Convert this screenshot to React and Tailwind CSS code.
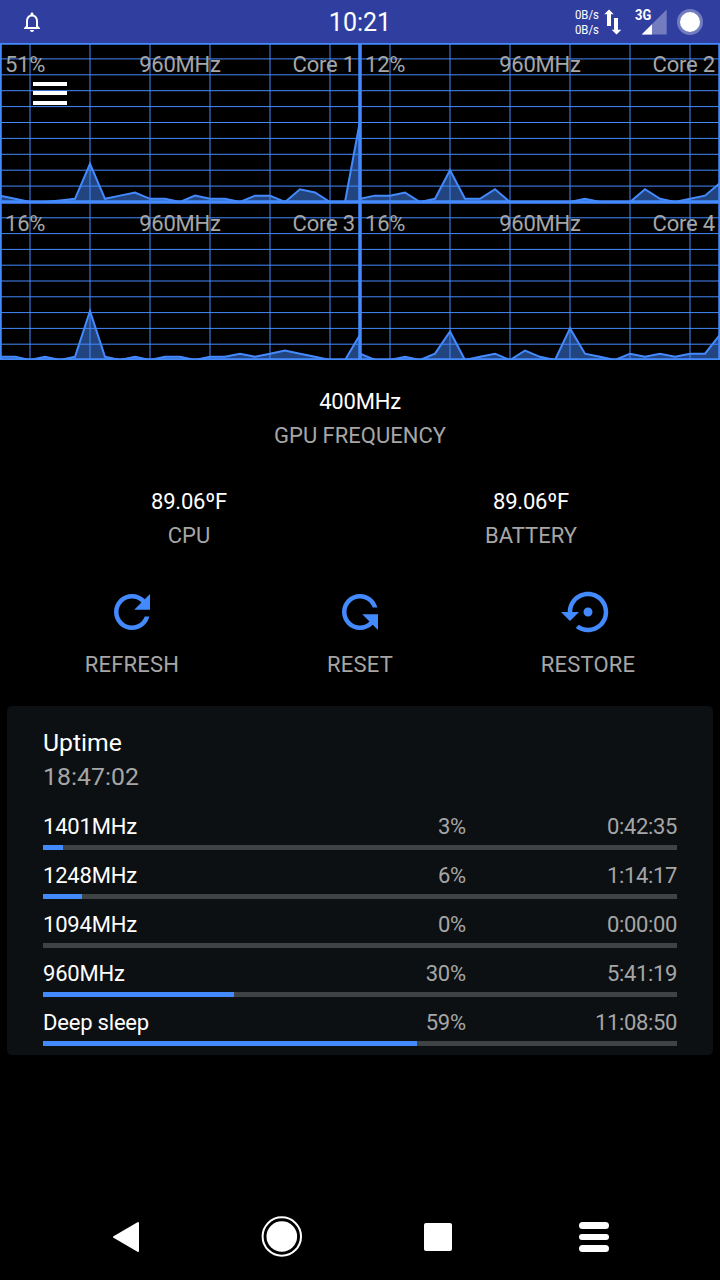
const CORES = [
  { name: 'Core 1', load: '51%', freq: '960MHz', height: 159, history: [4, 2, 0, 0, 1, 2, 24, 2, 4, 6, 2, 2, 0, 4, 2, 2, 0, 4, 4, 0, 8, 6, 0, 0, 51] },
  { name: 'Core 2', load: '12%', freq: '960MHz', height: 159, history: [2, 4, 4, 6, 0, 2, 20, 2, 2, 8, 0, 0, 0, 0, 0, 2, 0, 0, 0, 8, 2, 0, 2, 4, 12] },
  { name: 'Core 3', load: '16%', freq: '960MHz', height: 158, history: [2, 2, 0, 2, 0, 2, 31, 2, 0, 2, 0, 2, 2, 0, 2, 2, 4, 2, 4, 6, 4, 2, 0, 0, 16] },
  { name: 'Core 4', load: '16%', freq: '960MHz', height: 158, history: [4, 0, 0, 2, 0, 4, 18, 0, 2, 4, 0, 6, 2, 0, 20, 4, 2, 0, 4, 2, 4, 2, 4, 4, 16] },
];

const ROWS = [
  { label: '1401MHz', percent: '3%', time: '0:42:35', width: 3.15 },
  { label: '1248MHz', percent: '6%', time: '1:14:17', width: 6.15 },
  { label: '1094MHz', percent: '0%', time: '0:00:00', width: 0 },
  { label: '960MHz', percent: '30%', time: '5:41:19', width: 30.13 },
  { label: 'Deep sleep', percent: '59%', time: '11:08:50', width: 59 },
];

const REFRESH = 'M17.65 6.35C16.2 4.9 14.21 4 12 4c-4.42 0-7.99 3.58-7.99 8s3.57 8 7.99 8c3.73 0 6.84-2.55 7.73-6h-2.08c-.82 2.33-3.04 4-5.65 4-3.31 0-6-2.69-6-6s2.69-6 6-6c1.66 0 3.14.69 4.22 1.78L13 11h7V4l-2.35 2.35z';
const RESTORE = 'M14 12c0-1.1-.9-2-2-2s-2 .9-2 2 .9 2 2 2 2-.9 2-2zm-2-9c-4.97 0-9 4.03-9 9H0l4 4 4-4H5c0-3.87 3.13-7 7-7s7 3.13 7 7-3.13 7-7 7c-1.51 0-2.91-.49-4.06-1.3l-1.42 1.44C8.04 20.3 9.94 21 12 21c4.97 0 9-4.03 9-9s-4.03-9-9-9z';

function StatusBar() {
  return (
    <header className="relative h-[43px] bg-[#303f9f] flex items-center justify-between pl-5 pr-[17px] text-white">
      <svg viewBox="0 0 24 24" className="size-6" fill="currentColor">
        <path d="M12 22c1.1 0 2-.9 2-2h-4c0 1.1.9 2 2 2zm6-6v-5c0-3.07-1.63-5.64-4.5-6.32V4c0-.83-.67-1.5-1.5-1.5s-1.5.67-1.5 1.5v.68C7.64 5.36 6 7.92 6 11v5l-2 2v1h16v-1l-2-2zm-2 1H8v-6c0-2.48 1.51-4.5 4-4.5s4 2.02 4 4.5v6z" />
      </svg>
      <span className="absolute left-1/2 top-2 -translate-x-1/2 text-[25px] leading-[29px]">10:21</span>

      <div className="flex items-center">
        <div className="w-[29px] flex flex-col items-start text-[13.5px] leading-[15px]">
          <span className="origin-left scale-x-[0.84]">0B/s</span>
          <span className="origin-left scale-x-[0.84]">0B/s</span>
        </div>
        <svg viewBox="0 0 18 26" className="w-[18px] h-[26px]" fill="currentColor">
          <path d="M5 .5l4.7 4.800H7V17H3V5.300H.3z" />
          <path d="M10 9h4v11.800h3.300L12.500 25.500 7.700 20.800H10z" />
        </svg>
        <div className="relative ml-[13px] w-8 h-[26px]">
          <svg viewBox="0 0 32 26" className="w-8 h-[26px]" fill="currentColor">
            <path d="M31.700 .5v25H6.700z" opacity=".32" />
            <path d="M17 15.300v10.200H6.700z" />
          </svg>
          <span className="absolute left-0 -top-px origin-left scale-x-[0.86] text-[15px] leading-[15px] font-bold">3G</span>
        </div>
        <div className="ml-[10px] size-[26px] rounded-full bg-white/32 flex items-center justify-center">
          <div className="size-5 rounded-full bg-white" />
        </div>
      </div>
    </header>
  );
}

function CoreGraph({ core }) {
  const h = core.height;
  const points = core.history.map((v, i) => `${i * 15},${h - (v * h) / 100}`).join(' ');

  return (
    <div className="relative">
      <svg width="360" height={h} viewBox={`0 0 360 ${h}`} className="block" stroke="#448aff" fill="none">
        {[30, 90, 150, 210, 270, 330].map(x => <line key={x} x1={x} x2={x} y1="0" y2={h} />)}
        {[1, 2, 3, 4, 5, 6, 7, 8, 9].map(n => <line key={n} x1="0" x2="360" y1={(n * h) / 10} y2={(n * h) / 10} />)}
        <polygon points={`0,${h} ${points} 360,${h}`} fill="#448aff" fillOpacity=".5" stroke="none" />
        <polyline points={points} strokeWidth="2" />
        <rect width="360" height={h} strokeWidth="3.5" />
      </svg>
      <div className="absolute inset-x-[5px] top-[9px] grid grid-cols-3 leading-[26px] tracking-[-0.2px] text-[#a6a6a6]">
        <span>{core.load}</span>
        <span className="text-center">{core.freq}</span>
        <span className="text-right">{core.name}</span>
      </div>
    </div>
  );
}

function Reading({ value, label }) {
  return (
    <div className="flex-1 text-center leading-[34px]">
      <p className="text-white tracking-[-0.2px]">{value}</p>
      <p>{label}</p>
    </div>
  );
}

function Action({ path, label, flipped }) {
  return (
    <button className="flex-1 flex flex-col items-center">
      <svg viewBox="0 0 24 24" className={`size-[54px] ${flipped ? '-scale-y-100' : ''}`} fill="#448aff">
        <path d={path} />
      </svg>
      <span className="mt-[9px] leading-[34px] tracking-[0.2px]">{label}</span>
    </button>
  );
}

export default function App() {
  return (
    <div className="w-[720px] h-[1280px] bg-black flex flex-col overflow-hidden font-['Roboto',sans-serif] text-[22px] text-[#a6a6a6]">
      <StatusBar />

      <section className="relative grid grid-cols-2">
        {CORES.map(core => <CoreGraph key={core.name} core={core} />)}
        {/* Drawer toggle floats over the first graph */}
        <button className="absolute left-[33px] top-[39px] flex flex-col gap-[5.7px]">
          <span className="w-[34px] h-[3.8px] bg-white" />
          <span className="w-[34px] h-[3.8px] bg-white" />
          <span className="w-[34px] h-[3.8px] bg-white" />
        </button>
      </section>

      <section className="px-[18px] pt-[25px]">
        <div className="flex">
          <Reading value="400MHz" label="GPU FREQUENCY" />
        </div>
        <div className="flex mt-8">
          <Reading value="89.06ºF" label="CPU" />
          <Reading value="89.06ºF" label="BATTERY" />
        </div>
        <div className="flex mt-8">
          <Action path={REFRESH} label="REFRESH" />
          <Action path={REFRESH} label="RESET" flipped />
          <Action path={RESTORE} label="RESTORE" />
        </div>
      </section>

      <section className="mt-6 mx-[7px] rounded-[5px] bg-[#0c1012] px-9 pt-5 pb-[9px]">
        <h2 className="text-[24.75px] leading-[34px] text-white">Uptime</h2>
        <p className="text-[24.75px] leading-[34px] tracking-[0.05px]">18:47:02</p>
        <div className="mt-5 flex flex-col gap-[13px]">
          {ROWS.map(row => (
            <div key={row.label}>
              <div className="grid grid-cols-3 leading-[26px] tracking-[-0.2px]">
                <span className="text-white">{row.label}</span>
                <span className="text-right tracking-[-0.35px]">{row.percent}</span>
                <span className="text-right tracking-[-0.35px]">{row.time}</span>
              </div>
              <div className="mt-[5px] h-[5px] bg-[#404344]">
                <div className="h-full bg-[#448aff]" style={{ width: `${row.width}%` }} />
              </div>
            </div>
          ))}
        </div>
      </section>

      <nav className="mt-auto h-[86px] px-12 grid grid-cols-4 place-items-center">
        <svg viewBox="0 0 42 42" className="size-[42px]" fill="white" stroke="white" strokeWidth="2" strokeLinejoin="round">
          <path d="M9 21L33 7v28z" />
        </svg>
        <svg viewBox="0 0 42 42" className="size-[42px]" fill="white">
          <circle cx="20.800" cy="20.500" r="19.200" fill="none" stroke="white" strokeWidth="2" />
          <circle cx="20.800" cy="20.500" r="15.300" />
        </svg>
        <div className="size-7 rounded-[2px] bg-white" />
        <div className="flex flex-col gap-[5px]">
          <span className="w-[30px] h-[6.5px] rounded-full bg-white" />
          <span className="w-[30px] h-[6.5px] rounded-full bg-white" />
          <span className="w-[30px] h-[6.5px] rounded-full bg-white" />
        </div>
      </nav>
    </div>
  );
}
